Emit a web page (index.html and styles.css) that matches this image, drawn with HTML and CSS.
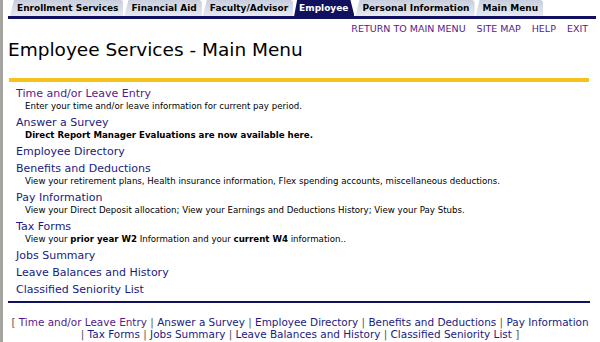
FILE: index.html
```html
<!DOCTYPE html>
<html>
<head>
<meta charset="utf-8">
<title>Employee Services - Main Menu</title>
<link rel="stylesheet" href="styles.css">
</head>
<body>
<div class="page">
  <div class="tabbar">
    <span class="tab">Enrollment Services</span>
    <span class="tab">Financial Aid</span>
    <span class="tab">Faculty/Advisor</span>
    <span class="tab active">Employee</span>
    <span class="tab">Personal Information</span>
    <span class="tab">Main Menu</span>
  </div>
  <div class="toplinks">
    <a href="#">RETURN TO MAIN MENU</a>
    <a href="#">SITE MAP</a>
    <a href="#">HELP</a>
    <a href="#">EXIT</a>
  </div>
  <h1 class="title">Employee Services - Main Menu</h1>
  <div class="rule"></div>
  <div class="menu">
    <div class="item"><a class="link visited" href="#">Time and/or Leave Entry</a></div>
    <div class="desc">Enter your time and/or leave information for current pay period.</div>
    <div class="item"><a class="link" href="#">Answer a Survey</a></div>
    <div class="desc"><b>Direct Report Manager Evaluations are now available here.</b></div>
    <div class="item"><a class="link" href="#">Employee Directory</a></div>
    <div class="item"><a class="link" href="#">Benefits and Deductions</a></div>
    <div class="desc">View your retirement plans, Health insurance information, Flex spending accounts, miscellaneous deductions.</div>
    <div class="item"><a class="link" href="#">Pay Information</a></div>
    <div class="desc">View your Direct Deposit allocation; View your Earnings and Deductions History; View your Pay Stubs.</div>
    <div class="item"><a class="link" href="#">Tax Forms</a></div>
    <div class="desc">View your <b>prior year W2</b> Information and your <b>current W4</b> information..</div>
    <div class="item"><a class="link" href="#">Jobs Summary</a></div>
    <div class="item"><a class="link" href="#">Leave Balances and History</a></div>
    <div class="item"><a class="link" href="#">Classified Seniority List</a></div>
  </div>
  <div class="bottomrule"></div>
  <div class="footer">
    <div class="fline"><span class="sep">[</span> <a class="flink visited" href="#">Time and/or Leave Entry</a> <span class="sep">|</span> <a class="flink" href="#">Answer a Survey</a> <span class="sep">|</span> <a class="flink" href="#">Employee Directory</a> <span class="sep">|</span> <a class="flink" href="#">Benefits and Deductions</a> <span class="sep">|</span> <a class="flink" href="#">Pay Information</a></div>
    <div class="fline"><span class="sep">|</span> <a class="flink" href="#">Tax Forms</a> <span class="sep">|</span> <a class="flink" href="#">Jobs Summary</a> <span class="sep">|</span> <a class="flink" href="#">Leave Balances and History</a> <span class="sep">|</span> <a class="flink" href="#">Classified Seniority List</a> <span class="sep">]</span></div>
  </div>
</div>
</body>
</html>
```

FILE: styles.css
```css
html, body {
  margin: 0;
  padding: 0;
  background: #ffffff;
}
body {
  font-family: "DejaVu Sans", Verdana, sans-serif;
  color: #000000;
}
.page {
  box-sizing: border-box;
  min-height: 342px;
  border-left: 3px solid #a4a4a0;
  padding: 0 8px 0 5px;
}
.tabbar {
  display: flex;
  align-items: flex-end;
  padding: 0 0 0 2px;
  border-bottom: 3px solid #10105e;
  margin-right: -4px;
}
.tab {
  height: 16px;
  line-height: 16px;
  font-size: 9px;
  font-weight: bold;
  padding: 0 5px 0 7px;
  margin-right: 1px;
  background: linear-gradient(#c8cedd, #e6e9f1);
  color: #000000;
  white-space: nowrap;
  clip-path: polygon(4px 0, calc(100% - 2px) 0, 100% 2px, 100% 100%, 0 100%);
}
.tab.active {
  background: #10105e;
  color: #ffffff;
  padding: 0 6px 0 5px;
  clip-path: polygon(3px 0, calc(100% - 4px) 0, 100% 100%, 0 100%);
}
.toplinks {
  display: flex;
  justify-content: flex-end;
  gap: 11px;
  padding: 3px 4px 0 0;
  height: 14px;
  line-height: 14px;
  font-size: 9.5px;
}
.toplinks a {
  color: #551a8b;
  text-decoration: none;
}
.title {
  margin: 3px 0 0 0;
  font-size: 18.5px;
  line-height: 22px;
  font-weight: normal;
  color: #000000;
}
.rule {
  height: 4px;
  background: #f3c21b;
  margin: 17px 3px 0 1px;
}
.menu {
  padding: 3px 0 0 8px;
}
.item {
  height: 17px;
  line-height: 17px;
  font-size: 11px;
}
.link {
  color: #1a1a80;
  text-decoration: none;
}
.link.visited, .flink.visited {
  color: #551a8b;
}
.desc {
  font-size: 8.65px;
  line-height: 12px;
  height: 12px;
  margin: -2px 0 2px 9px;
  white-space: nowrap;
}
.bottomrule {
  height: 2px;
  background: #10105e;
  margin: 3px 2px 0 0;
}
.footer {
  margin-top: 13px;
  text-align: center;
  font-size: 10.45px;
  line-height: 12px;
}
.fline {
  white-space: nowrap;
}
.flink {
  color: #1a1a80;
  text-decoration: none;
}
.sep {
  color: #555555;
}
```
